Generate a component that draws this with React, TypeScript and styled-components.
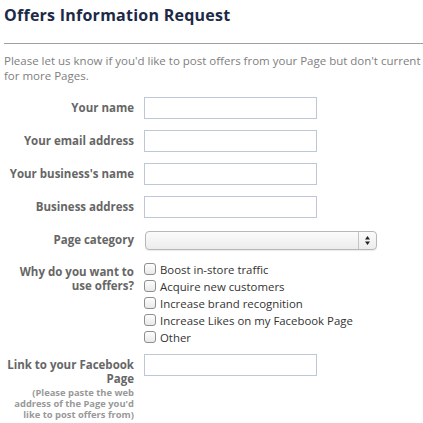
import React from "react";
import styled, { createGlobalStyle } from "styled-components";

const Global = createGlobalStyle`
  html, body { margin: 0; padding: 0; background: #fff; overflow: hidden; }
  body { font-family: "Open Sans", "DejaVu Sans", sans-serif; }
`;

const Page = styled.div`
  width: 423px;
  padding: 4px 0 0 4px;
  box-sizing: border-box;
`;

const Title = styled.h1`
  margin: 0;
  font-size: 16px;
  font-weight: 700;
  letter-spacing: 0.25px;
  line-height: 22px;
  color: #1c2a47;
  padding-bottom: 17px;
  border-bottom: 1px solid #a0a0a0;
`;

const Intro = styled.p`
  margin: 9px 0 0;
  font-size: 11.5px;
  line-height: 15px;
  color: #808080;
`;

const IntroLine = styled.span`
  display: block;
  white-space: nowrap;
`;

const Form = styled.div`
  display: grid;
  grid-template-columns: 130px 1fr;
  column-gap: 10px;
  row-gap: 11px;
  margin-top: 14px;
  align-items: start;
`;

const Label = styled.div<{ $pad?: number }>`
  text-align: right;
  font-size: 11.5px;
  font-weight: 700;
  color: #666;
  line-height: 14px;
  padding-top: ${(p) => p.$pad ?? 4}px;
`;

const Help = styled.div`
  font-size: 9.4px;
  line-height: 11px;
  color: #999;
  font-weight: 700;
  padding-top: 1px;
`;

const TextInput = styled.div`
  width: 173px;
  height: 22px;
  box-sizing: border-box;
  border: 1px solid #bdc7d8;
  background: #fff;
`;

const Select = styled.div`
  margin: 2px 0 0 1px;
  width: 232px;
  height: 19px;
  box-sizing: border-box;
  border: 1px solid #b7b7b7;
  border-radius: 4px;
  background: linear-gradient(#fbfbfb, #ececec);
  display: flex;
  justify-content: flex-end;
  box-shadow: 0 1px 1px rgba(0, 0, 0, 0.08);
`;

const Arrows = styled.div`
  width: 17px;
  border-left: 1px solid #c4c4c4;
  display: flex;
  align-items: center;
  justify-content: center;
`;

const Checks = styled.div`
  display: flex;
  flex-direction: column;
  gap: 3px;
  padding-top: 1px;
  margin-bottom: -1px;
`;

const CheckRow = styled.label`
  display: flex;
  align-items: center;
  gap: 4px;
  height: 14px;
  font-size: 11.4px;
  color: #333;
`;

const Box = styled.span`
  flex: none;
  width: 12px;
  height: 12px;
  box-sizing: border-box;
  border: 1px solid #8e8e8e;
  border-radius: 3px;
  background: linear-gradient(#fdfdfd, #e9e9e9);
`;

const options = [
  "Boost in-store traffic",
  "Acquire new customers",
  "Increase brand recognition",
  "Increase Likes on my Facebook Page",
  "Other",
];

export default function App() {
  return (
    <Page>
      <Global />
      <Title>Offers Information Request</Title>
      <Intro>
        <IntroLine>Please let us know if you'd like to post offers from your Page but don't current</IntroLine>
        <IntroLine>for more Pages.</IntroLine>
      </Intro>
      <Form>
        <Label>Your name</Label>
        <TextInput />
        <Label>Your email address</Label>
        <TextInput />
        <Label>Your business's name</Label>
        <TextInput />
        <Label>Business address</Label>
        <TextInput />
        <Label $pad={4}>Page category</Label>
        <Select>
          <Arrows>
            <svg width="7" height="11" viewBox="0 0 7 11">
              <path d="M3.5 1 L6 4.5 H1 Z" fill="#222" />
              <path d="M3.5 10 L6 6.5 H1 Z" fill="#222" />
            </svg>
          </Arrows>
        </Select>
        <Label $pad={4}>Why do you want to use offers?</Label>
        <Checks>
          {options.map((o) => (
            <CheckRow key={o}>
              <Box />
              {o}
            </CheckRow>
          ))}
        </Checks>
        <Label>
          Link to your Facebook Page
          <Help>(Please paste the web address of the Page you'd like to post offers from)</Help>
        </Label>
        <TextInput />
      </Form>
    </Page>
  );
}
